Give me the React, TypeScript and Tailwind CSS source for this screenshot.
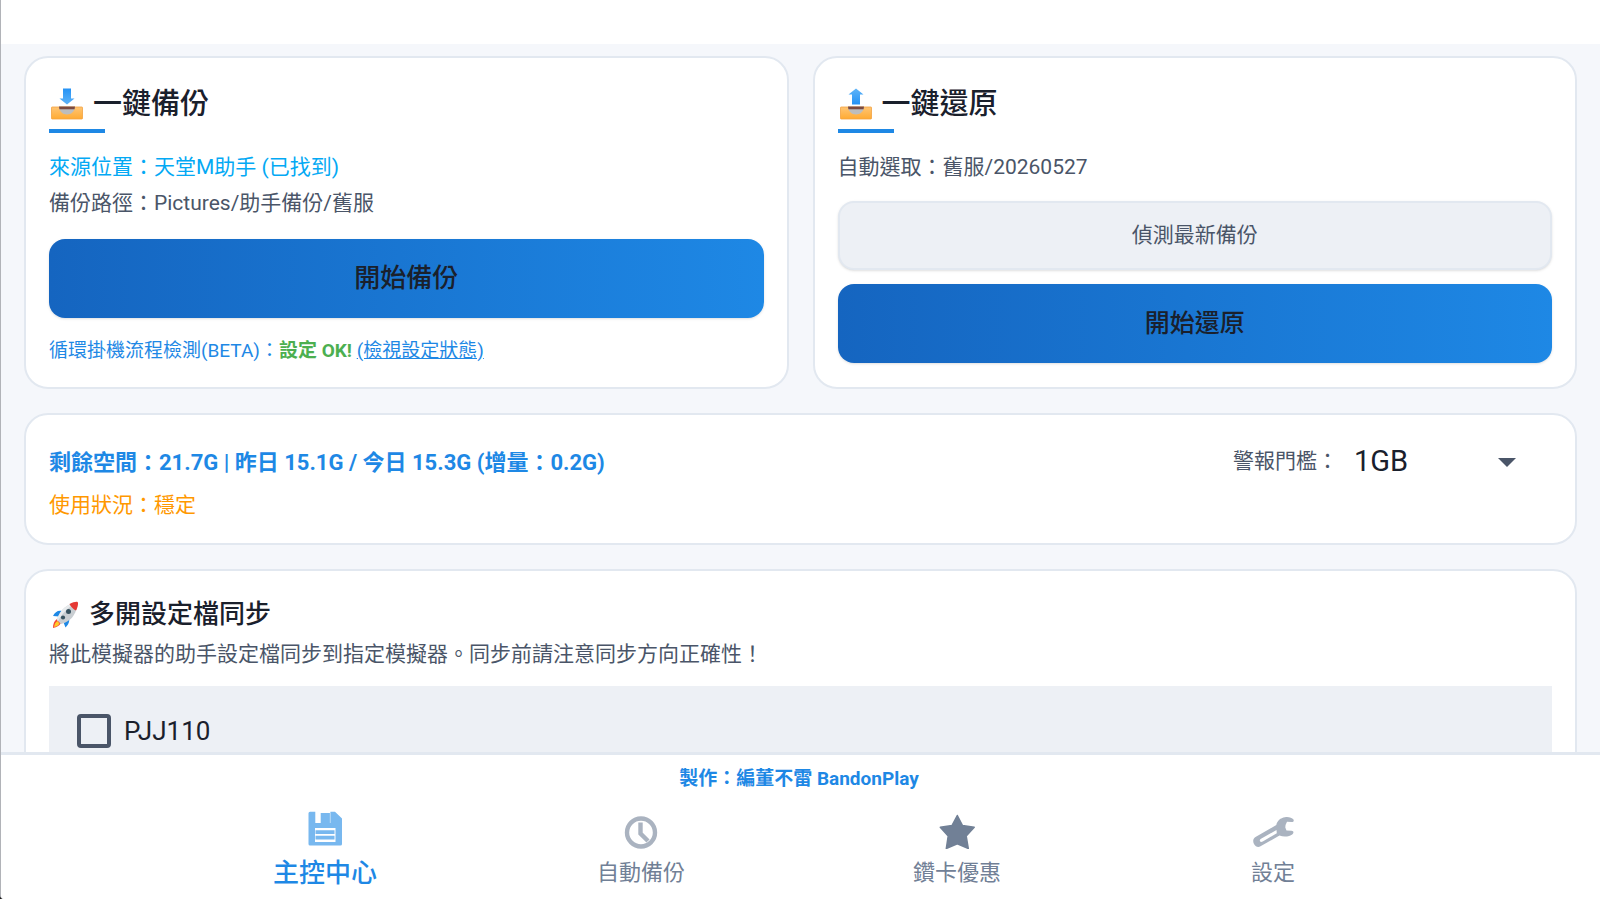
import type { ReactNode } from 'react';

const TrayIcon = ({ direction }: { direction: 'down' | 'up' }) => (
    <svg className="w-9 h-9" viewBox="0 0 36 36" aria-hidden="true">
        <defs>
            <linearGradient id={`tray-${direction}`} x1="0" y1="0" x2="0" y2="1">
                <stop offset="0" stopColor="#ffc574" />
                <stop offset="1" stopColor="#ffab33" />
            </linearGradient>
            <linearGradient id={`arrow-${direction}`} x1="0" y1="0" x2="0" y2="1">
                <stop offset="0" stopColor={direction === 'down' ? '#2492f5' : '#5fb4f8'} />
                <stop offset="1" stopColor={direction === 'down' ? '#5fb4f8' : '#2492f5'} />
            </linearGradient>
        </defs>
        <path
            d={direction === 'down' ? 'M14 2.500h8v10h3.500L18 18.500 10.500 12.500H14z' : 'M18 2.500l7.500 6H22V18.500h-8V8.500h-3.500z'}
            fill={`url(#arrow-${direction})`}
        />
        <rect x="2.500" y="21" width="31" height="12" rx="0.600" fill={`url(#tray-${direction})`} stroke="#f2a241" strokeWidth="0.800" />
        <path d="M10 21h16c-.6 4.800-4 7.500-8 7.500s-7.400-2.700-8-7.500z" fill="#bdbdbd" />
        <path d="M10 20.500h16l-.4 2.800H10.400z" fill="#7a4a41" />
    </svg>
);

const RocketIcon = () => (
    <svg className="w-8 h-8" viewBox="0 0 32 32" aria-hidden="true">
        <path d="M4 30c0-4 1-7 4-9l4 4c-2 3-4 4-8 5z" fill="#f44336" />
        <path d="M5 29c.5-3 1.500-5 3.500-6l2 2.500C9.500 27.500 8 28.500 5 29z" fill="#ffca28" />
        <path d="M13 13c-4-1-7 1-9 5l6 .5zM20 20c1 4-1 7-3.500 9.500L14 23z" fill="#1e88e5" />
        <path d="M8 22C10 14 16 7 25 5l3 3c-1 9-7 16-16 18z" fill="#c9ced2" />
        <path d="M8 22C10 14 16 7 25 5l1 1C18 10 13 16 9 23z" fill="#e8ebed" />
        <path d="M20.500 6C24 4 27.500 3.500 28.500 4s.500 5-1.500 8.500c-2.500-1-5.500-4-6.500-6.500z" fill="#e53935" />
        <circle cx="19.500" cy="13.500" r="2.500" fill="#37525f" />
        <circle cx="14" cy="19.500" r="2.100" fill="#37525f" />
    </svg>
);

const SaveIcon = () => (
    <svg className="w-[42px] h-10" viewBox="0 0 42 40" fill="#78b8ef" aria-hidden="true">
        <path
            fillRule="evenodd"
            d="M6 2.700H11.300V14H26.400V2.700H31L38 9.500V35Q38 36.500 36.500 36.500H6Q4.500 36.500 4.500 35V4.200Q4.500 2.700 6 2.700ZM11 19V33H31.500V19Z"
        />
        <path d="M16.700 4h9.200v10.500h-9.200z" />
        <path d="M11.500 21.200h19v3.800h-19zM11.500 26.800h19v3.600h-19z" />
    </svg>
);

const ClockIcon = () => (
    <svg className="w-[42px] h-10" viewBox="0 0 42 40" fill="none" stroke="#aab3c0" aria-hidden="true">
        <circle cx="21" cy="23.500" r="14" strokeWidth="4.400" />
        <path d="M20.500 13.500V24.500L28 32" strokeWidth="4.400" />
    </svg>
);

const StarIcon = () => (
    <svg className="w-[42px] h-10" viewBox="0 0 42 40" aria-hidden="true">
        <path
            d="M21.300 6.500L26.500 16.600L38.200 18.300L30.200 27L32.300 39.500L21.300 34.800L10.300 39.500L12.200 27L4.300 18.300L16 16.600Z"
            fill="#718096"
            stroke="#718096"
            strokeWidth="1.500"
            strokeLinejoin="round"
        />
    </svg>
);

const WrenchIcon = () => (
    <svg className="w-[42px] h-10" viewBox="0 0 42 40" fill="#aab3c0" aria-hidden="true">
        <path
            fillRule="evenodd"
            d="M33 8.200C36.500 7.600 40 8.700 41.500 10.500C42.300 12 41 13.200 39.500 13L35 12.700Q33.300 15.500 33.300 18.500L34.500 21.500L39.500 21.700C41.800 21.700 42 24 40.500 25.200C37.500 27.600 32 28.200 27.500 26.600L8.500 37.300C6 38.700 3.500 37.600 2 35C.500 32 1.200 29.500 3.500 28L24.300 16C25 11.800 28.500 8.800 33 8.200ZM24.500 21L9 29.800Q7.300 31 8 32.300Q8.800 33.500 10.700 32.500L24.800 24.300Z"
        />
    </svg>
);

const Card = ({ className = '', children }: { className?: string; children: ReactNode }) => (
    <section className={`rounded-3xl border-2 border-[#e2e8f0] bg-white p-[23px] ${className}`}>
        {children}
    </section>
);

const CardTitle = ({ icon, children }: { icon: ReactNode; children: ReactNode }) => (
    <>
        <h2 className="flex items-center gap-2 text-[29px] leading-[46px] font-medium">
            {icon}
            {children}
        </h2>
        <div className="mt-[2px] mb-4 h-1 w-14 bg-[#1e88e5]" />
    </>
);

const tabs = [
    { label: '主控中心', icon: <SaveIcon />, active: true },
    { label: '自動備份', icon: <ClockIcon />, active: false },
    { label: '鑽卡優惠', icon: <StarIcon />, active: false },
    { label: '設定', icon: <WrenchIcon />, active: false },
];

const App = () => (
    <div className="h-screen bg-[#1a1a1a]">
        <div className="flex h-full flex-col overflow-hidden rounded-bl border-l border-[#b1b3b8] bg-[#f5f7fb] font-[Roboto,'Noto_Sans_CJK_TC',sans-serif] text-[#1a202c]">
            <header className="h-11 shrink-0 bg-white" />

            <main className="min-h-0 flex-1 overflow-hidden px-[23px] pt-3">
                <div className="grid grid-cols-2 gap-6">
                    <Card>
                        <CardTitle icon={<TrayIcon direction="down" />}>一鍵備份</CardTitle>
                        <p className="text-[21px] leading-9 text-[#03a9f4]">來源位置：天堂M助手 (已找到)</p>
                        <p className="text-[21px] leading-9 text-[#4a5568]">備份路徑：Pictures/助手備份/舊服</p>
                        <button
                            type="button"
                            className="mt-[18px] block h-[79px] w-full rounded-2xl bg-linear-to-r from-[#1565c0] to-[#1e88e5] text-[26px] font-medium shadow-sm"
                        >
                            開始備份
                        </button>
                        <p className="mt-5 text-[19px] leading-[26px] text-[#1e88e5]">
                            循環掛機流程檢測(BETA)：
                            <strong className="font-bold text-[#4caf50]">設定 OK!</strong>{' '}
                            <a href="#status" className="underline">
                                (檢視設定狀態)
                            </a>
                        </p>
                    </Card>

                    <Card>
                        <CardTitle icon={<TrayIcon direction="up" />}>一鍵還原</CardTitle>
                        <p className="text-[21px] leading-9 text-[#4a5568]">自動選取：舊服/20260527</p>
                        <button
                            type="button"
                            className="mt-4 block h-[69px] w-full rounded-2xl border-2 border-[#e2e8f0] bg-[#edf0f5] text-[21px] text-[#4a5568] shadow-sm"
                        >
                            偵測最新備份
                        </button>
                        <button
                            type="button"
                            className="mt-[14px] block h-[79px] w-full rounded-2xl bg-linear-to-r from-[#1565c0] to-[#1e88e5] text-[25px] font-medium shadow-sm"
                        >
                            開始還原
                        </button>
                    </Card>
                </div>

                <Card className="mt-6">
                    <div className="flex h-12 items-center justify-between">
                        <p className="text-[22px] font-bold text-[#1e88e5]">
                            剩餘空間：21.7G | 昨日 15.1G / 今日 15.3G (增量：0.2G)
                        </p>
                        <div className="flex items-center pr-9">
                            <label htmlFor="threshold" className="text-[21px] text-[#4a5568]">
                                警報門檻：
                            </label>
                            <select
                                id="threshold"
                                defaultValue="1"
                                className="ml-4 w-[164px] appearance-none bg-transparent text-[29px]"
                            >
                                <option value="1">1GB</option>
                                <option value="2">2GB</option>
                                <option value="5">5GB</option>
                            </select>
                            <svg className="pointer-events-none -ml-5 h-[9px] w-[18px]" viewBox="0 0 18 9" aria-hidden="true">
                                <path d="M0 0h18L9 9z" fill="#4a5568" />
                            </svg>
                        </div>
                    </div>
                    <p className="mt-1 text-[21px] leading-[30px] text-[#ff9800]">使用狀況：穩定</p>
                </Card>

                <Card className="mt-6">
                    <h2 className="flex items-center gap-2 text-[26px] leading-10 font-medium">
                        <RocketIcon />
                        多開設定檔同步
                    </h2>
                    <p className="text-[21px] leading-10 text-[#4a5568]">
                        將此模擬器的助手設定檔同步到指定模擬器。同步前請注意同步方向正確性！
                    </p>
                    <div className="mt-3 bg-[#edf0f5] p-7">
                        <label className="flex items-center gap-[13px] text-[26px] leading-[34px]">
                            <input
                                type="checkbox"
                                className="size-[34px] appearance-none rounded border-4 border-[#4a5568] checked:bg-[#1e88e5]"
                            />
                            PJJ110
                        </label>
                    </div>
                </Card>
            </main>

            <footer className="shrink-0 border-t-[3px] border-[#e2e8f0] bg-white pt-[9px] pr-[3px] pb-[9px]">
                <p className="text-center text-[19px] leading-[30px] font-bold text-[#1e88e5]">
                    製作：編董不雷 BandonPlay
                </p>
                <nav className="mx-auto mt-[15px] grid max-w-[1264px] grid-cols-4">
                    {tabs.map(({ label, icon, active }) => (
                        <button key={label} type="button" className="flex flex-col items-center gap-[7px]">
                            {icon}
                            <span
                                className={
                                    active
                                        ? 'text-[26px] leading-[34px] font-medium text-[#1e88e5]'
                                        : 'text-[22px] leading-[34px] text-[#718096]'
                                }
                            >
                                {label}
                            </span>
                        </button>
                    ))}
                </nav>
            </footer>
        </div>
    </div>
);

export default App;
